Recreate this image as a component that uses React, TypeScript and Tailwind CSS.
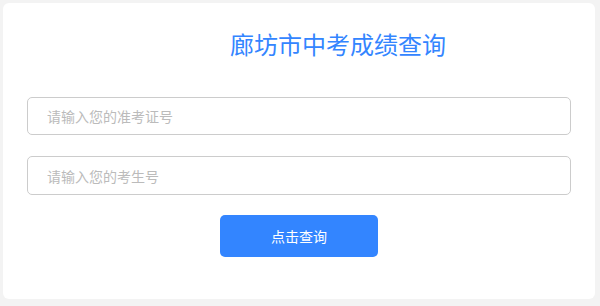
const App = () => {
  return (
    <div className="w-[600px] h-[306px] bg-[#f3f3f3] p-[3px] pr-[5px] pb-[7px] font-['Microsoft_YaHei','Noto_Sans_CJK_SC',sans-serif]">
      <div className="h-full bg-white rounded-[6px] px-[24px] pt-[26px]">
        <h1 className="pl-[78px] text-center text-[24px] leading-[30px] text-[#3385ff] font-normal">
          廊坊市中考成绩查询
        </h1>
        <div className="mt-[38px] flex flex-col gap-[21px]">
          <input
            className="h-[38px] w-full rounded-[5px] border border-[#cccccc] px-[19px] text-[14px] text-[#333] placeholder:text-[#bbbbbb] outline-none"
            placeholder="请输入您的准考证号"
          />
          <input
            className="h-[39px] w-full rounded-[5px] border border-[#cccccc] px-[19px] text-[14px] text-[#333] placeholder:text-[#bbbbbb] outline-none"
            placeholder="请输入您的考生号"
          />
        </div>
        <div className="mt-[20px] flex justify-center">
          <button className="h-[42px] w-[158px] rounded-[5px] bg-[#3385ff] text-[14px] text-white">
            点击查询
          </button>
        </div>
      </div>
    </div>
  )
}

export default App
